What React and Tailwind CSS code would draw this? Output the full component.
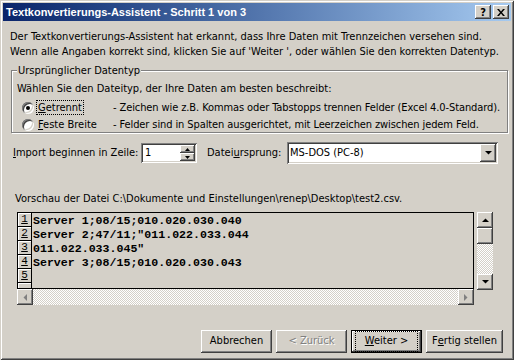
import React from 'react';

const raised =
  'shadow-[inset_-1px_-1px_#404040,inset_1px_1px_#ffffff,inset_-2px_-2px_#808080,inset_2px_2px_#d4d0c8]';
const sunken =
  'shadow-[inset_1px_1px_#808080,inset_-1px_-1px_#ffffff,inset_2px_2px_#404040,inset_-2px_-2px_#d4d0c8]';
const checker =
  'bg-[repeating-conic-gradient(#ffffff_0_25%,#d4d0c8_0_50%)] bg-[length:2px_2px]';

function Arrow({ dir, grey }) {
  const pts = {
    up: '0,4 7,4 3.5,0.5',
    down: '0,0 7,0 3.5,3.5',
    left: '4,0 4,7 0.5,3.5',
    right: '0,0 0,7 3.5,3.5',
  }[dir];
  const vertical = dir === 'up' || dir === 'down';
  return (
    <svg width={vertical ? 7 : 4} height={vertical ? 4 : 7} viewBox={vertical ? '0 0 7 4' : '0 0 4 7'}>
      <polygon points={pts} fill={grey ? '#808080' : '#000'} />
    </svg>
  );
}

function ScrollBtn({ dir, className = '', grey }) {
  return (
    <div className={`w-4 h-4 flex items-center justify-center bg-[#d4d0c8] ${raised} ${className}`}>
      <Arrow dir={dir} grey={grey} />
    </div>
  );
}

function Radio({ checked }) {
  return (
    <div className="w-3 h-3 rounded-full bg-white shadow-[inset_1px_1px_#808080,inset_-1px_-1px_#ffffff,inset_2px_2px_#404040,inset_-2px_-2px_#d4d0c8] flex items-center justify-center">
      {checked && <div className="w-1 h-1 rounded-full bg-black" />}
    </div>
  );
}

function Button({ children, disabled, isDefault, w = 'w-[71px]' }) {
  return (
    <div
      className={`${w} h-[23px] flex items-center justify-center bg-[#d4d0c8] ${
        isDefault
          ? 'border border-black shadow-[inset_-1px_-1px_#404040,inset_1px_1px_#ffffff,inset_-2px_-2px_#808080]'
          : raised
      } ${disabled ? 'text-[#808080] [text-shadow:1px_1px_#ffffff]' : 'text-black'}`}
    >
      {children}
    </div>
  );
}

const rows = [
  'Server 1;08/15;010.020.030.040',
  'Server 2;47/11;"011.022.033.044',
  '011.022.033.045"',
  'Server 3;08/15;010.020.030.043',
  '',
];

export default function App() {
  return (
    <div className="w-[514px] h-[360px] bg-[#d4d0c8] p-[3px] flex flex-col text-[11px] text-black font-['DejaVu_Sans_Condensed','DejaVu_Sans',sans-serif] shadow-[inset_1px_1px_#d4d0c8,inset_-1px_-1px_#404040,inset_2px_2px_#ffffff,inset_-2px_-2px_#808080] overflow-hidden">
      {/* title bar */}
      <div className="h-[18px] flex items-center pl-[3px] pr-[2px] bg-gradient-to-r from-[#0a246a] to-[#a6caf0]">
        <span className="text-white font-bold text-[11px] font-['Liberation_Sans',sans-serif] flex-1">
          Textkonvertierungs-Assistent - Schritt 1 von 3
        </span>
        <div className={`w-4 h-[14px] ${raised} bg-[#d4d0c8] flex items-center justify-center font-bold text-[11px] leading-none`}>?</div>
        <div className={`ml-[2px] w-4 h-[14px] ${raised} bg-[#d4d0c8] flex items-center justify-center`}>
          <svg width="8" height="7" viewBox="0 0 8 7">
            <path d="M0 0h2l2 2.5L6 0h2L5 3.5 8 7H6L4 4.5 2 7H0l3-3.5z" fill="#000" />
          </svg>
        </div>
      </div>

      <div className="pl-[7px] pt-[8px] leading-[15px]">
        <p>Der Textkonvertierungs-Assistent hat erkannt, dass Ihre Daten mit Trennzeichen versehen sind.</p>
        <p>Wenn alle Angaben korrekt sind, klicken Sie auf 'Weiter ', oder wählen Sie den korrekten Datentyp.</p>
      </div>

      {/* group box */}
      <div className="relative ml-[8px] mr-[3px] mt-[11px] h-[63px] border border-[#808080] shadow-[1px_1px_#ffffff,inset_1px_1px_#ffffff] pl-[5px] pt-[10px] leading-[15px]">
        <span className="absolute -top-[8px] left-[5px] bg-[#d4d0c8] px-[1px]">Ursprünglicher Datentyp</span>
        <p>Wählen Sie den Dateityp, der Ihre Daten am besten beschreibt:</p>
        <div className="flex items-center h-[17px] mt-[3px] whitespace-nowrap">
          <div className="ml-[5px] mr-[3px]"><Radio checked /></div>
          <span className="w-[76px] shrink-0">
            <span className="outline outline-1 outline-dotted outline-black px-[1px]"><u>G</u>etrennt</span>
          </span>
          <span className="tracking-[-0.1px]">- Zeichen wie z.B. Kommas oder Tabstopps trennen Felder (Excel 4.0-Standard).</span>
        </div>
        <div className="flex items-center h-[17px] whitespace-nowrap">
          <div className="ml-[5px] mr-[3px]"><Radio /></div>
          <span className="w-[76px] shrink-0 pl-[1px]"><u>F</u>este Breite</span>
          <span className="tracking-[-0.1px]">- Felder sind in Spalten ausgerichtet, mit Leerzeichen zwischen jedem Feld.</span>
        </div>
      </div>

      {/* import row */}
      <div className="flex items-center mt-[9px] pl-[10px] h-[22px]">
        <span className="w-[128px]"><u>I</u>mport beginnen in Zeile:</span>
        <div className={`w-[56px] h-[20px] bg-white ${sunken} flex items-center pl-[4px] pr-[2px]`}>
          <span className="flex-1">1</span>
          <div className="flex flex-col">
            <div className={`w-[15px] h-[8px] ${raised} bg-[#d4d0c8] flex items-center justify-center`}>
              <svg width="5" height="3" viewBox="0 0 5 3"><polygon points="0,3 5,3 2.5,0" fill="#000" /></svg>
            </div>
            <div className={`w-[15px] h-[8px] ${raised} bg-[#d4d0c8] flex items-center justify-center`}>
              <svg width="5" height="3" viewBox="0 0 5 3"><polygon points="0,0 5,0 2.5,3" fill="#000" /></svg>
            </div>
          </div>
        </div>
        <span className="ml-[10px] w-[80px]">Datei<u>u</u>rsprung:</span>
        <div className={`w-[211px] h-[22px] bg-white ${sunken} flex items-center pl-[3px] pr-[2px]`}>
          <span className="flex-1">MS-DOS (PC-8)</span>
          <div className={`w-4 h-[18px] ${raised} bg-[#d4d0c8] flex items-center justify-center`}>
            <Arrow dir="down" />
          </div>
        </div>
      </div>

      <p className="pl-[12px] mt-[27px] leading-[15px]">
        Vorschau der Datei C:\Dokumente und Einstellungen\renep\Desktop\test2.csv.
      </p>

      {/* preview */}
      <div className="flex mt-[6px] ml-[14px]">
        <div className="flex flex-col w-[457px]">
          <div className="h-[77px] border border-black bg-[#d4d0c8] flex overflow-hidden">
            <div className="w-[14px] flex flex-col border-r border-black">
              {[1, 2, 3, 4, 5, 6].map((n) => (
                <div
                  key={n}
                  className="h-[14px] shrink-0 border-b border-black shadow-[inset_1px_1px_#ffffff] flex items-center justify-center font-['Liberation_Mono',monospace] text-[11px]"
                >
                  {n < 6 && <u>{n}</u>}
                </div>
              ))}
            </div>
            <div className="flex flex-col font-['Liberation_Mono',monospace] text-[11.6px] font-semibold leading-[14px] pl-[1px] pt-[1px]">
              {rows.map((r, i) => (
                <div key={i} className="h-[14px] whitespace-pre">{r}</div>
              ))}
            </div>
          </div>
          <div className={`h-4 flex ${checker}`}>
            <ScrollBtn dir="left" grey />
            <div className="flex-1" />
            <ScrollBtn dir="right" grey />
          </div>
        </div>
        <div className={`ml-[3px] w-4 h-[78px] flex flex-col ${checker}`}>
          <ScrollBtn dir="up" />
          <div className={`w-4 h-4 bg-[#d4d0c8] ${raised}`} />
          <div className="flex-1" />
          <ScrollBtn dir="down" />
        </div>
      </div>

      {/* buttons */}
      <div className="flex justify-end gap-[4px] mt-[25px] pr-[8px]">
        <Button>Abbrechen</Button>
        <Button disabled>&lt; Zurück</Button>
        <Button isDefault>
          <span className="outline outline-1 outline-dotted outline-black outline-offset-[1px] px-[8px]">
            <u>W</u>eiter &gt;
          </span>
        </Button>
        <Button w="w-[77px]">F<u>e</u>rtig stellen</Button>
      </div>
    </div>
  );
}
